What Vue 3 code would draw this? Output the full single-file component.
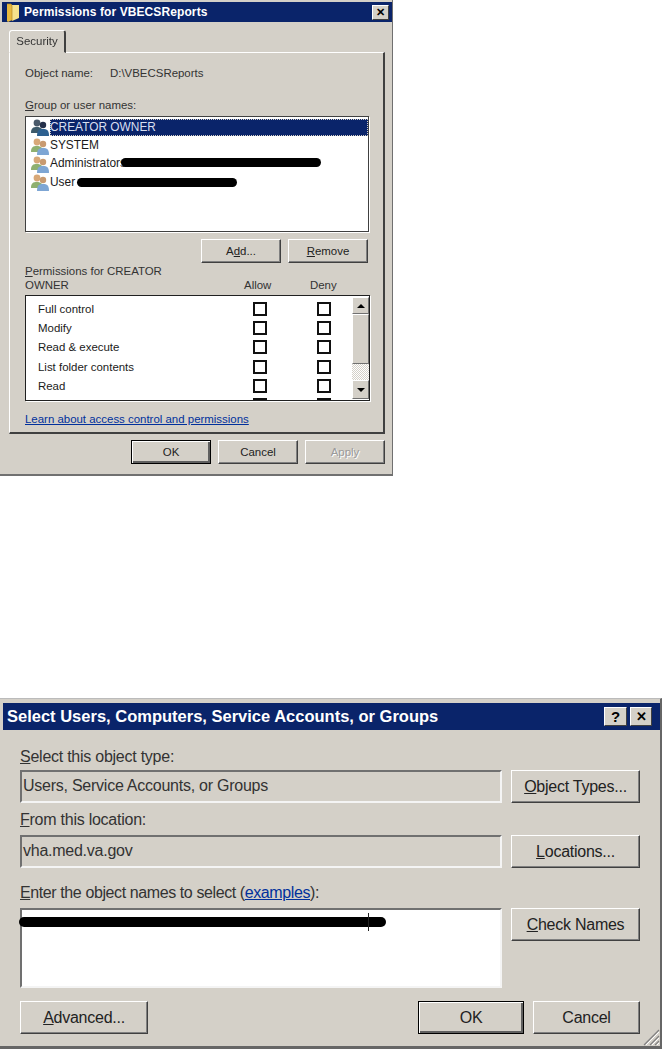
<script setup>
const users = [
  { name: 'CREATOR OWNER', selected: true, dark: true },
  { name: 'SYSTEM' },
  { name: 'Administrators', blob: 'blob-admin' },
  { name: 'User', blob: 'blob-user' }
]
const perms = ['Full control', 'Modify', 'Read & execute', 'List folder contents', 'Read', '']
</script>

<template>
  <div class="page">
    <section class="dlg one">
      <header class="title t1">
        <svg class="folder" width="14" height="19" viewBox="0 0 14 19">
          <path d="M1 1h4l1 1 v15l-4 2-1-1z" fill="#e8b93e" />
          <path d="M6 2h7v13l-7 3z" fill="#f6e28c" />
          <path d="M1 1h4l1 2v15" fill="none" stroke="#b58a2a" stroke-width=".7" />
        </svg>
        <span class="tt1">Permissions for VBECSReports</span>
        <span class="cap x1">✕</span>
      </header>
      <div class="tabs"><div class="tab">Security</div></div>
      <div class="panel">
        <div class="objrow"><span class="objl">Object name:</span><span>D:\VBECSReports</span></div>
        <div class="glabel"><u>G</u>roup or user names:</div>
        <div class="list sunk">
          <div v-for="u in users" :key="u.name" class="urow">
            <svg width="19" height="18" viewBox="0 0 19 18" class="uicon">
              <circle cx="6" cy="5" r="3.4" :fill="u.dark ? '#4a5a6a' : '#d8a878'" />
              <path d="M0 15c0-5 2-6 6-6s6 2 6 6z" :fill="u.dark ? '#3d5a6a' : '#8fb070'" />
              <circle cx="12" cy="7" r="3.2" :fill="u.dark ? '#25304a' : '#c89a70'" />
              <path d="M6 18c0-6 2-7 6-7s6 1 6 7z" :fill="u.dark ? '#2d6090' : '#7ea6d4'" />
            </svg>
            <span class="uname" :class="{ sel: u.selected }">{{ u.name }}</span>
            <i v-if="u.blob" class="blob" :class="u.blob"></i>
          </div>
        </div>
        <div class="btnrow">
          <button class="btn">A<u>d</u>d...</button>
          <button class="btn"><u>R</u>emove</button>
        </div>
        <div class="phead">
          <div class="pname"><u>P</u>ermissions for CREATOR<br />OWNER</div>
          <div class="pcol a">Allow</div>
          <div class="pcol d">Deny</div>
        </div>
        <div class="pbox">
          <div class="prows">
            <div v-for="(p, i) in perms" :key="i" class="prow">
              <span>{{ p }}</span><i class="cb"></i><i class="cb second"></i>
            </div>
          </div>
          <div class="sbar">
            <div class="sbtn up"></div>
            <div class="thumb"></div>
            <div class="dither"></div>
            <div class="sbtn down"></div>
          </div>
        </div>
        <a class="learn">Learn about access control and permissions</a>
      </div>
      <footer class="foot1">
        <button class="btn default">OK</button>
        <button class="btn">Cancel</button>
        <button class="btn off">Apply</button>
      </footer>
    </section>

    <section class="dlg two">
      <header class="title t2">
        <span class="tt2">Select Users, Computers, Service Accounts, or Groups</span>
        <span class="cap q">?</span>
        <span class="cap x2">✕</span>
      </header>
      <div class="body2">
        <div class="lab"><u>S</u>elect this object type:</div>
        <div class="line">
          <div class="field">Users, Service Accounts, or Groups</div>
          <button class="btn b2"><u>O</u>bject Types...</button>
        </div>
        <div class="lab l2"><u>F</u>rom this location:</div>
        <div class="line loc">
          <div class="field">vha.med.va.gov</div>
          <button class="btn b2"><u>L</u>ocations...</button>
        </div>
        <div class="lab l3"><u>E</u>nter the object names to select (<a class="ex">examples</a>):</div>
        <div class="line names">
          <div class="field entry"><i class="blob blob-names"></i></div>
          <button class="btn b2"><u>C</u>heck Names</button>
        </div>
        <div class="foot2">
          <button class="btn b2 adv"><u>A</u>dvanced...</button>
          <button class="btn b2 ok default">OK</button>
          <button class="btn b2 cancel">Cancel</button>
        </div>
      </div>
      <svg class="grip" width="18" height="18" viewBox="0 0 18 18">
        <path d="M17 2 2 17M17 8 8 17M17 13 13 17" stroke="#808080" stroke-width="1.2" />
        <path d="M17 4 4 17M17 10 10 17M17 15 15 17" stroke="#fff" stroke-width="1" />
      </svg>
    </section>
  </div>
</template>

<style>
html, body { margin: 0; background: #fff; }
</style>

<style scoped>
.page {
  width: 662px;
  height: 1051px;
  overflow: hidden;
  display: flex;
  flex-direction: column;
  font-family: "Liberation Sans", Arial, sans-serif;
  color: #1a1a1a;
  filter: blur(0.35px);
}
.dlg {
  position: relative;
  background: #d4d0c8;
  box-sizing: border-box;
}
.one {
  width: 393px;
  height: 476px;
  padding: 2px 0 0 0;
  border-right: 1px solid #707070;
  border-bottom: 2px solid #707070;
  font-size: 11.45px;
  flex: none;
}
.two {
  margin: 222px 0 0 0;
  width: 662px;
  height: 351px;
  padding: 4px 0 0 3px;
  border-top: 1px solid #bbb;
  border-bottom: 3px solid #666;
  border-right: 2px solid #666;
  font-size: 16px;
  letter-spacing: -.25px;
  flex: none;
}
.title {
  background: #0a246a;
  color: #fff;
  font-weight: bold;
  display: flex;
  align-items: center;
}
.t1 { height: 20px; margin-left: 2px; width: 390px; font-size: 12px; padding-left: 4px; box-sizing: border-box; }
.t2 { height: 27px; width: 657px; font-size: 16.5px; padding-left: 4px; box-sizing: border-box; letter-spacing: 0; }
.folder { margin-right: 4px; flex: none; }
.tt1 { flex: 1; letter-spacing: .1px; }
.tt2 { flex: 1; }
.cap {
  background: #d4d0c8;
  color: #000;
  display: flex;
  align-items: center;
  justify-content: center;
  font-weight: bold;
  box-sizing: border-box;
  border: 1px solid;
  border-color: #fff #404040 #404040 #fff;
}
.x1 { width: 17px; height: 15px; font-size: 11px; margin-right: 3px; }
.q { width: 23px; height: 19px; font-size: 15px; margin-right: 3px; }
.x2 { width: 22px; height: 19px; font-size: 13px; margin-right: 8px; }

.tabs { height: 30px; padding: 8px 0 0 9px; box-sizing: border-box; display: flex; }
.tab {
  width: 57px;
  height: 23px;
  box-sizing: border-box;
  margin-bottom: -1px;
  background: #d4d0c8;
  border: 1px solid;
  border-color: #fff #404040 transparent #fff;
  border-right-width: 2px;
  border-radius: 3px 3px 0 0;
  text-align: center;
  line-height: 20px;
  position: relative;
  z-index: 1;
  color: #333;
}
.panel {
  margin-left: 9px;
  width: 376px;
  height: 382px;
  box-sizing: border-box;
  padding: 13px 0 0 15px;
  border: 1px solid;
  border-color: #fff #404040 #404040 #fff;
  border-width: 1px 2px 2px 1px;
}
.objrow { height: 14px; line-height: 14px; display: flex; color: #333; }
.objl { width: 85px; }
.glabel { margin-top: 18px; height: 14px; line-height: 14px; color: #333; }
.sunk { background: #fff; border: 1px solid #404040; box-shadow: 1px 1px 0 #fff; box-sizing: border-box; }
.list { margin-top: 4px; width: 344px; height: 116px; padding: 1px 0 0 5px; }
.urow {
  position: relative;
  height: 18.4px;
  display: flex;
  align-items: center;
  font-size: 11.9px;
}
.uicon { flex: none; }
.uname { flex: none; line-height: 17px; }
.uname.sel {
  background: #0a246a;
  color: #d8dff0;
  width: 318px;
  outline: 1px dotted #d4d0c8;
  outline-offset: -1px;
}
.blob { position: absolute; background: #000; border-radius: 6px; display: block; }
.blob-admin { left: 90px; top: 3px; width: 200px; height: 9px; }
.blob-user { left: 46px; top: 5px; width: 160px; height: 9px; }
.blob-names { left: -3px; top: 7px; width: 367px; height: 10px; }
.blob-names::after { content: ""; position: absolute; left: 349px; top: -4px; width: 1px; height: 18px; background: #222; }

.btn {
  font: inherit;
  letter-spacing: inherit;
  color: #222;
  background: #d4d0c8;
  box-sizing: border-box;
  width: 80px;
  height: 24px;
  padding: 0;
  border: 1px solid;
  border-color: #fff #404040 #404040 #fff;
  box-shadow: inset -1px -1px 0 #808080;
}
.btn.default { border: 1px solid #000; box-shadow: inset 1px 1px 0 #fff, inset -2px -2px 0 #606060; }
.btn.off { color: #9a9a9a; text-shadow: 1px 1px 0 #fff; }
.btnrow { margin-top: 7px; width: 343px; display: flex; justify-content: flex-end; gap: 7px; }
.phead { margin-top: 1px; height: 28px; width: 344px; position: relative; line-height: 14px; color: #333; }
.pcol { position: absolute; bottom: 0; }
.pcol.a { left: 219px; }
.pcol.d { left: 285px; }
.pbox {
  margin-top: 3px;
  width: 345px;
  height: 106px;
  background: #fff;
  border: 1px solid #202020;
  box-sizing: border-box;
  box-shadow: 1px 1px 0 #fff;
  display: flex;
  overflow: hidden;
}
.prows { flex: 1; padding: 3px 0 0 12px; overflow: hidden; }
.prow {
  height: 19.3px;
  display: grid;
  grid-template-columns: 215px 14px 50px 14px;
  align-items: center;
}
.cb { width: 14px; height: 14px; box-sizing: border-box; border: 2px solid #111; background: #fff; display: block; }
.cb.second { grid-column: 4; }
.sbar { width: 17px; flex: none; display: flex; flex-direction: column; padding: 1px 0; box-sizing: border-box; }
.sbtn {
  height: 17px;
  flex: none;
  background: #d4d0c8;
  box-sizing: border-box;
  border: 1px solid;
  border-color: #fff #707070 #707070 #fff;
  display: flex;
  align-items: center;
  justify-content: center;
}
.up::after { content: ""; border: 4px solid transparent; border-top: 0; border-bottom: 4px solid #000; }
.down::after { content: ""; border: 4px solid transparent; border-bottom: 0; border-top: 4px solid #000; }
.sbtn.down { height: 19px; }
.thumb { height: 50px; flex: none; background: #d4d0c8; box-sizing: border-box; border: 1px solid; border-color: #fff #707070 #707070 #fff; }
.dither { flex: 1; background: repeating-conic-gradient(#fff 0 25%, #d4d0c8 0 50%) 0 0 / 2px 2px; }
.learn { display: block; margin-top: 11px; line-height: 14px; color: #00309c; text-decoration: underline; }
.foot1 { margin-top: 6px; padding-right: 7px; display: flex; justify-content: flex-end; gap: 7px; }

.body2 { padding: 20px 0 0 17px; width: 620px; color: #333; }
.lab { height: 14px; line-height: 14px; }
.l2 { margin-top: 10px; }
.l3 { margin-top: 18px; letter-spacing: -.4px; }
.ex { color: #00309c; text-decoration: underline; }
.line { display: flex; gap: 9px; margin-top: 6px; align-items: flex-start; }
.line.loc { margin-top: 8px; }
.line.names { margin-top: 8px; }
.field {
  width: 482px;
  height: 33px;
  box-sizing: border-box;
  border: 2px solid;
  border-color: #707070 #f4f4f4 #f4f4f4 #707070;
  line-height: 27px;
  padding-left: 1px;
  flex: none;
}
.entry { height: 80px; background: #fff; position: relative; }
.b2 { width: 129px; height: 33px; font-size: 16px; flex: none; }
.foot2 { margin-top: 13px; display: flex; gap: 9px; }
.b2.adv { width: 128px; margin-right: 261px; }
.b2.ok { width: 106px; }
.b2.cancel { width: 107px; }
.grip { position: absolute; right: 0; bottom: 0; }
</style>
